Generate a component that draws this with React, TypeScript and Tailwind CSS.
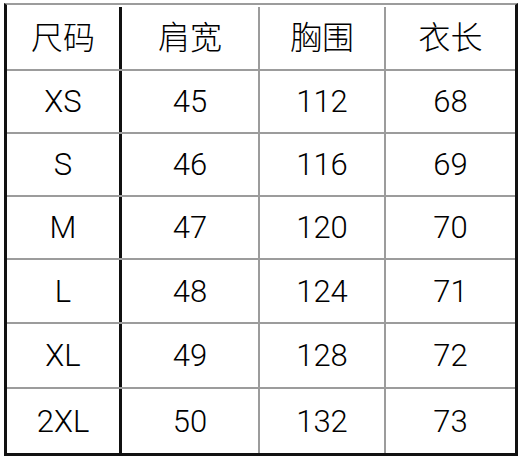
import React from 'react';

const headers = ['尺码', '肩宽', '胸围', '衣长'];

const rows: { size: string; values: string[]; h: string }[] = [
  { size: 'XS', values: ['45', '112', '68'], h: 'h-[63px]' },
  { size: 'S', values: ['46', '116', '69'], h: 'h-[63px]' },
  { size: 'M', values: ['47', '120', '70'], h: 'h-[63px]' },
  { size: 'L', values: ['48', '124', '71'], h: 'h-[64px]' },
  { size: 'XL', values: ['49', '128', '72'], h: 'h-[65px]' },
  { size: '2XL', values: ['50', '132', '73'], h: 'h-[64px]' },
];

// column widths include their right-hand divider
const colClass = [
  'w-[115px] border-r-[3px] border-r-[#111]',
  'w-[138px] border-r-2 border-r-[#9c9c9c]',
  'w-[126px] border-r-2 border-r-[#9c9c9c]',
  'w-[129px]',
];

function Row({ cells, h, last, head }: { cells: string[]; h: string; last?: boolean; head?: boolean }) {
  return (
    <div
      className={`flex ${h} ${last ? '' : 'border-b-2 border-b-[#9c9c9c]'} ${
        head ? 'text-[32px] pt-[2px] font-light' : 'text-[31px] font-light'
      }`}
    >
      {cells.map((c, i) => (
        <div key={i} className={`flex items-center justify-center ${colClass[i]}`}>
          {c}
        </div>
      ))}
    </div>
  );
}

export default function App() {
  return (
    <div className="w-[520px] h-[457px] bg-white pt-[3px] pl-[4px] overflow-hidden">
      <div
        className="w-[514px] h-[453px] border-t-2 border-t-[#9c9c9c] border-l-[3px] border-r-[3px] border-b-[3px] border-l-[#111] border-r-[#111] border-b-[#111] leading-none text-black"
        style={{ fontFamily: 'Roboto, "Noto Sans CJK SC", sans-serif' }}
      >
        <Row cells={headers} h="h-[66px]" head />
        {rows.map((r, i) => (
          <Row key={r.size} cells={[r.size, ...r.values]} h={r.h} last={i === rows.length - 1} />
        ))}
      </div>
    </div>
  );
}
